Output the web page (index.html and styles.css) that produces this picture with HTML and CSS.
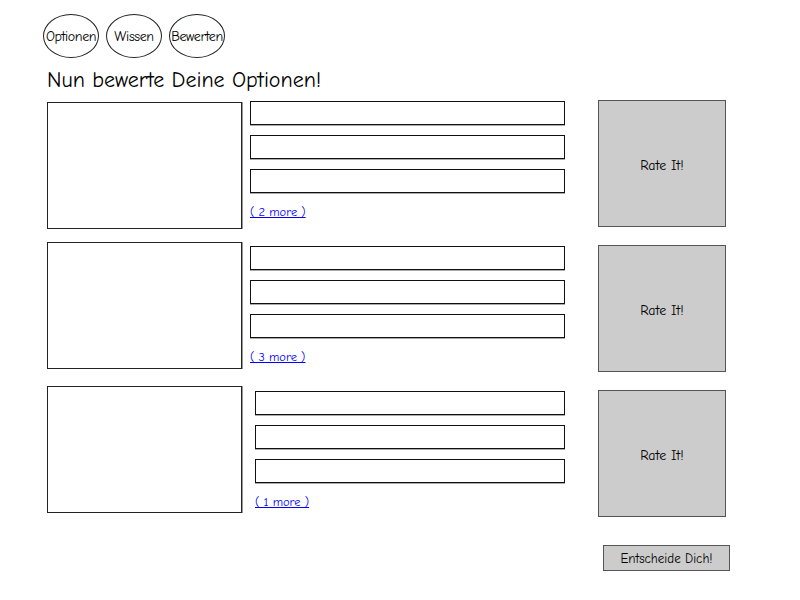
FILE: index.html
```html
<!DOCTYPE html>
<html lang="de">
<head>
  <meta charset="UTF-8">
  <meta name="viewport" content="width=device-width, initial-scale=1">
  <title>Bewerten</title>
  <link rel="stylesheet" href="styles.css">
</head>
<body>
  <div class="page">
    <div class="nav">
      <div class="bubble">Optionen</div>
      <div class="bubble">Wissen</div>
      <div class="bubble">Bewerten</div>
    </div>

    <h2>Nun bewerte Deine Optionen!</h2>

    <div class="rows">
      <div class="row">
        <div class="image"></div>
        <div class="fields">
          <input type="text">
          <input type="text">
          <input type="text">
          <a href="#">( 2 more )</a>
        </div>
        <button class="rate">Rate It!</button>
      </div>

      <div class="row">
        <div class="image up"></div>
        <div class="fields">
          <input type="text">
          <input type="text">
          <input type="text">
          <a href="#">( 3 more )</a>
        </div>
        <button class="rate">Rate It!</button>
      </div>

      <div class="row">
        <div class="image up more"></div>
        <div class="fields shifted">
          <input type="text">
          <input type="text">
          <input type="text">
          <a href="#">( 1 more )</a>
        </div>
        <button class="rate">Rate It!</button>
      </div>
    </div>

    <div class="footer">
      <button class="decide">Entscheide Dich!</button>
    </div>
  </div>
</body>
</html>
```

FILE: styles.css
```css
* { box-sizing: border-box; }
body {
  margin: 0;
  background: white;
  font-family: "Comic Sans MS", "Comic Neue", "DejaVu Sans", sans-serif;
  color: #000;
}
.page {
  width: 800px;
  height: 600px;
  padding: 14px 0 0 43px;
}
.nav {
  display: flex;
  gap: 7px;
}
.bubble {
  width: 56px;
  height: 44px;
  border: 1px solid #222;
  border-radius: 50%;
  display: flex;
  justify-content: center;
  align-items: center;
  font-size: 14px;
  letter-spacing: -0.4px;
  white-space: nowrap;
}
h2 {
  margin: 9px 0 0 4px;
  font-size: 22px;
  font-weight: normal;
  line-height: 26px;
  height: 26px;
}
.rows {
  margin: 7px 0 0 4px;
  display: flex;
  flex-direction: column;
  gap: 17px;
}
.row {
  display: flex;
  align-items: flex-start;
  height: 128px;
}
.image {
  width: 195px;
  height: 127px;
  margin-top: 2px;
  border: 1px solid #222;
  box-shadow: 1px 0 0 #999;
}
.image.up { margin-top: -3px; }
.image.more { margin-top: -4px; }
.fields {
  width: 315px;
  margin: 1px 0 0 8px;
  display: flex;
  flex-direction: column;
  gap: 10px;
}
.fields.shifted {
  width: 310px;
  margin-left: 13px;
  margin-top: 1px;
}
.fields input {
  height: 24px;
  border: 1px solid #111;
  border-radius: 0;
  padding: 0 4px;
  box-shadow: 0 1px 0 #aaa;
}
.fields a {
  margin-top: 1px;
  font-size: 12.5px;
  color: #0000ff;
  line-height: 16px;
}
.rate {
  width: 128px;
  height: 127px;
  margin-left: 33px;
  padding: 4px 0 0;
  background: #cccccc;
  border: 1px solid #555;
  font-family: inherit;
  font-size: 14px;
  color: #000;
}
.footer {
  width: 687px;
  margin-top: 27px;
  display: flex;
  justify-content: flex-end;
}
.decide {
  width: 127px;
  height: 26px;
  background: #cccccc;
  border: 1px solid #555;
  font-family: inherit;
  font-size: 13px;
  color: #000;
  padding: 0;
}
```
